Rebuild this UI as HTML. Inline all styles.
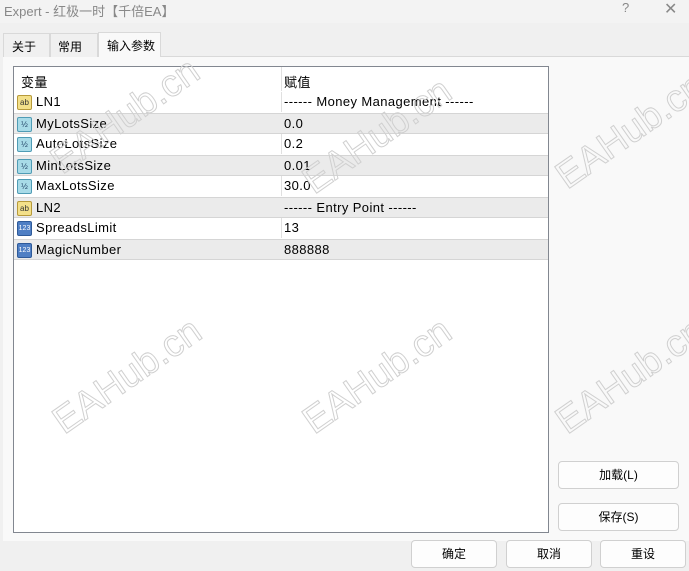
<!DOCTYPE html>
<html><head><meta charset="utf-8"><style>
*{margin:0;padding:0;box-sizing:border-box}
body{width:689px;height:571px;background:#f0f0f0;font-family:"Liberation Sans","Noto Sans CJK SC",sans-serif;font-size:12px;color:#000;position:relative;overflow:hidden}
.title{position:absolute;left:0;top:0;width:689px;height:23px;background:#f3f3f3;color:#888;font-size:13px;padding:1px 0 0 4px}
.title .q{position:absolute;left:622px;top:0}
.title .x{position:absolute;left:664px;top:-1px;font-size:16px}
.tabs .t{position:absolute;top:33px;height:24px;border:1px solid #d9d9d9;border-bottom:none;background:#f0f0f0;padding:4px 0 0 8px}
.panel{position:absolute;left:3px;top:56px;width:686px;height:485px;background:#f9f9f9;border-top:1px solid #d9d9d9}
.tbl{position:absolute;left:13px;top:66px;width:536px;height:467px;background:#fff;border:1px solid #828790;font-size:13px;letter-spacing:0.4px}
.row{position:absolute;left:0;width:534px;height:21px;border-bottom:1px solid #fff}
.row.g{background:#ebebeb;border-top:1px solid #d5d5d5;border-bottom:1px solid #d5d5d5}
.c1{position:absolute;left:22px;top:2px}
.c2{position:absolute;left:270px;top:2px}
.div{position:absolute;left:267px;top:0;width:1px;height:193px;background:#e0e0e0}
.ic{position:absolute;left:3px;top:3px;width:15px;height:15px;border-radius:2px;font-size:8px;line-height:14px;text-align:center;letter-spacing:0}
.ab{background:#f3e08a;border:1px solid #b79a3a;color:#333}
.hf{background:#a8dbe8;border:1px solid #4f9cb5;color:#246}
.n{background:#4f7fc4;border:1px solid #2e5a9a;color:#fff;font-size:7px}
.btn{position:absolute;height:28px;background:#fdfdfd;border:1px solid #d0d0d0;border-radius:4px;text-align:center;line-height:26px;font-size:12px}
.wm{position:absolute;font-size:38px;font-family:"Liberation Sans",sans-serif;color:transparent;-webkit-text-stroke:1px #d0d0d0;transform:rotate(-35deg);white-space:nowrap}
</style></head><body>
<div class="title">Expert - 红极一时【千倍EA】<span class="q">?</span><span class="x">✕</span></div>
<div class="panel"></div>
<div class="tabs">
<div class="t" style="left:3px;width:47px">关于</div>
<div class="t" style="left:50px;width:48px;padding-left:7px">常用</div>
<div class="t" style="left:98px;width:63px;top:32px;height:25px;background:#f9f9f9">输入参数</div>
</div>
<div class="tbl">
<div class="div"></div>
<div class="row" style="top:0;height:25px"><span class="c1" style="left:7px;top:5px">变量</span><span class="c2" style="top:5px">赋值</span></div>
<div class="row" style="top:25px"><span class="ic ab">ab</span><span class="c1">LN1</span><span class="c2">------ Money Management ------</span></div>
<div class="row g" style="top:46px"><span class="ic hf">½</span><span class="c1">MyLotsSize</span><span class="c2">0.0</span></div>
<div class="row" style="top:67px"><span class="ic hf">½</span><span class="c1">AutoLotsSize</span><span class="c2">0.2</span></div>
<div class="row g" style="top:88px"><span class="ic hf">½</span><span class="c1">MinLotsSize</span><span class="c2">0.01</span></div>
<div class="row" style="top:109px"><span class="ic hf">½</span><span class="c1">MaxLotsSize</span><span class="c2">30.0</span></div>
<div class="row g" style="top:130px"><span class="ic ab">ab</span><span class="c1">LN2</span><span class="c2">------ Entry Point ------</span></div>
<div class="row" style="top:151px"><span class="ic n">123</span><span class="c1">SpreadsLimit</span><span class="c2">13</span></div>
<div class="row g" style="top:172px"><span class="ic n">123</span><span class="c1">MagicNumber</span><span class="c2">888888</span></div>
</div>
<div class="wm" style="left:40px;top:95px">EAHub.cn</div>
<div class="wm" style="left:292px;top:115px">EAHub.cn</div>
<div class="wm" style="left:545px;top:110px">EAHub.cn</div>
<div class="wm" style="left:42px;top:355px">EAHub.cn</div>
<div class="wm" style="left:292px;top:355px">EAHub.cn</div>
<div class="wm" style="left:545px;top:355px">EAHub.cn</div>
<div class="btn" style="left:558px;top:461px;width:121px">加载(L)</div>
<div class="btn" style="left:558px;top:503px;width:121px">保存(S)</div>
<div class="btn" style="left:411px;top:540px;width:86px">确定</div>
<div class="btn" style="left:506px;top:540px;width:86px">取消</div>
<div class="btn" style="left:600px;top:540px;width:86px">重设</div>
</body></html>
